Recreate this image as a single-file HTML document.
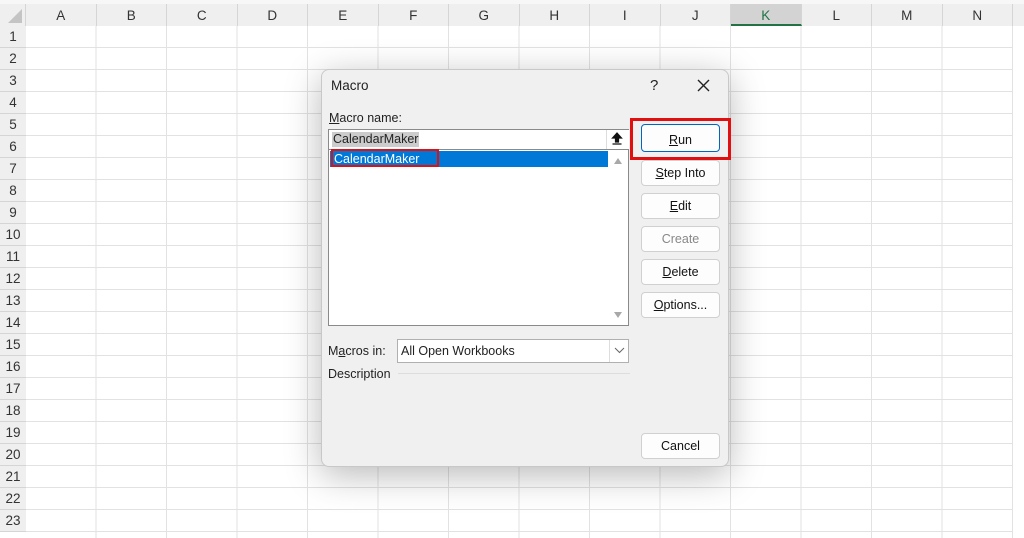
<!DOCTYPE html><html><head><style>
body{margin:0;width:1024px;height:538px;overflow:hidden;background:#fff;font-family:"Liberation Sans",sans-serif;position:relative}
.a{position:absolute}
.grid{left:26px;top:26px;width:987px;height:512px;background:
repeating-linear-gradient(90deg,transparent 0 69.5px,#e2e2e2 69.5px 70.5px),
repeating-linear-gradient(180deg,transparent 0 21px,#e2e2e2 21px 22px),#fff}
.ch{top:4px;height:22px;font-size:13.5px;color:#333;text-align:center;line-height:23px;background:#efefef;border-right:1px solid #d5d5d5;box-sizing:border-box}
.rh{left:0;width:26px;height:22px;font-size:13.5px;color:#333;text-align:center;line-height:22px;background:#efefef;border-bottom:1px solid #d5d5d5;box-sizing:border-box}
.dlg{left:321px;top:69px;width:408px;height:398px;background:#f0f0f0;border:1px solid #c8c8c8;border-radius:8px;box-shadow:0 8px 36px rgba(0,0,0,.28);box-sizing:border-box}
.t{font-size:13px;color:#222}
.btn{left:641px;width:79px;height:26px;background:#fdfdfd;border:1px solid #d0d0d0;border-radius:4px;box-sizing:border-box;font-size:12.5px;text-align:center;line-height:25px;color:#111}
u{text-decoration:underline}
</style></head><body>
<div class="a" style="left:0;top:0;width:1024px;height:4px;background:#f7f7f7"></div>
<div class="a" style="left:0;top:4px;width:26px;height:22px;background:#efefef;border-right:1px solid #d5d5d5;box-sizing:border-box"></div>
<svg class="a" style="left:8px;top:9px" width="14" height="14"><polygon points="14,0 14,14 0,14" fill="#c4c4c4"/></svg>
<div class="a grid"></div>
<div class="a ch" style="left:26px;width:70.5px">A</div>
<div class="a ch" style="left:96.5px;width:70.5px">B</div>
<div class="a ch" style="left:167px;width:70.5px">C</div>
<div class="a ch" style="left:237.5px;width:70.5px">D</div>
<div class="a ch" style="left:308px;width:70.5px">E</div>
<div class="a ch" style="left:378.5px;width:70.5px">F</div>
<div class="a ch" style="left:449px;width:70.5px">G</div>
<div class="a ch" style="left:519.5px;width:70.5px">H</div>
<div class="a ch" style="left:590px;width:70.5px">I</div>
<div class="a ch" style="left:660.5px;width:70.5px">J</div>
<div class="a ch" style="left:731px;width:70.5px;background:#d3d3d3;color:#217346;border-bottom:2px solid #217346">K</div>
<div class="a ch" style="left:801.5px;width:70.5px">L</div>
<div class="a ch" style="left:872px;width:70.5px">M</div>
<div class="a ch" style="left:942.5px;width:70.5px">N</div>
<div class="a ch" style="left:1013px;width:11px;border:none"></div>
<div class="a rh" style="top:26px">1</div><div class="a rh" style="top:48px">2</div><div class="a rh" style="top:70px">3</div><div class="a rh" style="top:92px">4</div><div class="a rh" style="top:114px">5</div><div class="a rh" style="top:136px">6</div><div class="a rh" style="top:158px">7</div><div class="a rh" style="top:180px">8</div><div class="a rh" style="top:202px">9</div><div class="a rh" style="top:224px">10</div><div class="a rh" style="top:246px">11</div><div class="a rh" style="top:268px">12</div><div class="a rh" style="top:290px">13</div><div class="a rh" style="top:312px">14</div><div class="a rh" style="top:334px">15</div><div class="a rh" style="top:356px">16</div><div class="a rh" style="top:378px">17</div><div class="a rh" style="top:400px">18</div><div class="a rh" style="top:422px">19</div><div class="a rh" style="top:444px">20</div><div class="a rh" style="top:466px">21</div><div class="a rh" style="top:488px">22</div><div class="a rh" style="top:510px">23</div>

<div class="a dlg"></div>
<div class="a t" style="left:331px;top:78px;font-size:13.5px">Macro</div>
<div class="a t" style="left:650px;top:77px;font-size:15px">?</div>
<svg class="a" style="left:697px;top:79px" width="13" height="13"><path d="M1 1L12 12M12 1L1 12" stroke="#222" stroke-width="1.4"/></svg>
<div class="a t" style="left:329px;top:111px;font-size:12.5px"><u>M</u>acro name:</div>
<div class="a" style="left:328px;top:129px;width:301px;height:21px;background:#fff;border:1px solid #8a8a8a;box-sizing:border-box"></div>
<div class="a t" style="left:332px;top:132px;font-size:12.5px;background:#ccc;padding:0 1px;line-height:15px">CalendarMaker</div>
<div class="a" style="left:606px;top:130px;width:22px;height:19px;background:#fff;border-left:1px solid #ddd"></div>
<svg class="a" style="left:611px;top:132px" width="12" height="14"><path d="M6 1L1.5 6H4.5V10H7.5V6H10.5Z M1.5 12H10.5" fill="#111" stroke="#111" stroke-width="1.2"/></svg>
<div class="a" style="left:328px;top:149px;width:301px;height:177px;background:#fff;border:1px solid #8a8a8a;box-sizing:border-box"></div>
<div class="a" style="left:330px;top:151px;width:278px;height:16px;background:#0078d7"></div>
<div class="a" style="left:334px;top:151px;font-size:12.5px;color:#fff;line-height:16px">CalendarMaker</div>
<div class="a" style="left:331px;top:149px;width:108px;height:18px;border:2px solid #e01010;box-sizing:border-box"></div>
<svg class="a" style="left:613px;top:157px" width="10" height="8"><polygon points="5,1 9,7 1,7" fill="#a8a8a8"/></svg>
<svg class="a" style="left:613px;top:311px" width="10" height="8"><polygon points="1,1 9,1 5,7" fill="#a8a8a8"/></svg>
<div class="a" style="left:630px;top:118px;width:101px;height:42px;border:3px solid #e01010;box-sizing:border-box"></div>
<div class="a btn" style="top:124px;height:28px;border:1px solid #0067c0;line-height:30px"><u>R</u>un</div>
<div class="a btn" style="top:160px"><u>S</u>tep Into</div>
<div class="a btn" style="top:193px"><u>E</u>dit</div>
<div class="a btn" style="top:226px;color:#888">Create</div>
<div class="a btn" style="top:259px"><u>D</u>elete</div>
<div class="a btn" style="top:292px"><u>O</u>ptions...</div>
<div class="a btn" style="top:433px">Cancel</div>
<div class="a t" style="left:328px;top:344px;font-size:12.5px">M<u>a</u>cros in:</div>
<div class="a" style="left:397px;top:339px;width:232px;height:24px;background:#fff;border:1px solid #b0b0b0;box-sizing:border-box"></div>
<div class="a t" style="left:401px;top:344px;font-size:12.5px">All Open Workbooks</div>
<div class="a" style="left:609px;top:340px;width:1px;height:22px;background:#ddd"></div>
<svg class="a" style="left:614px;top:347px" width="11" height="7"><path d="M1 1L5.5 5.5L10 1" stroke="#666" fill="none"/></svg>
<div class="a t" style="left:328px;top:367px;font-size:12.5px">Description</div>
<div class="a" style="left:398px;top:373px;width:232px;height:1px;background:#ddd"></div>
</body></html>
